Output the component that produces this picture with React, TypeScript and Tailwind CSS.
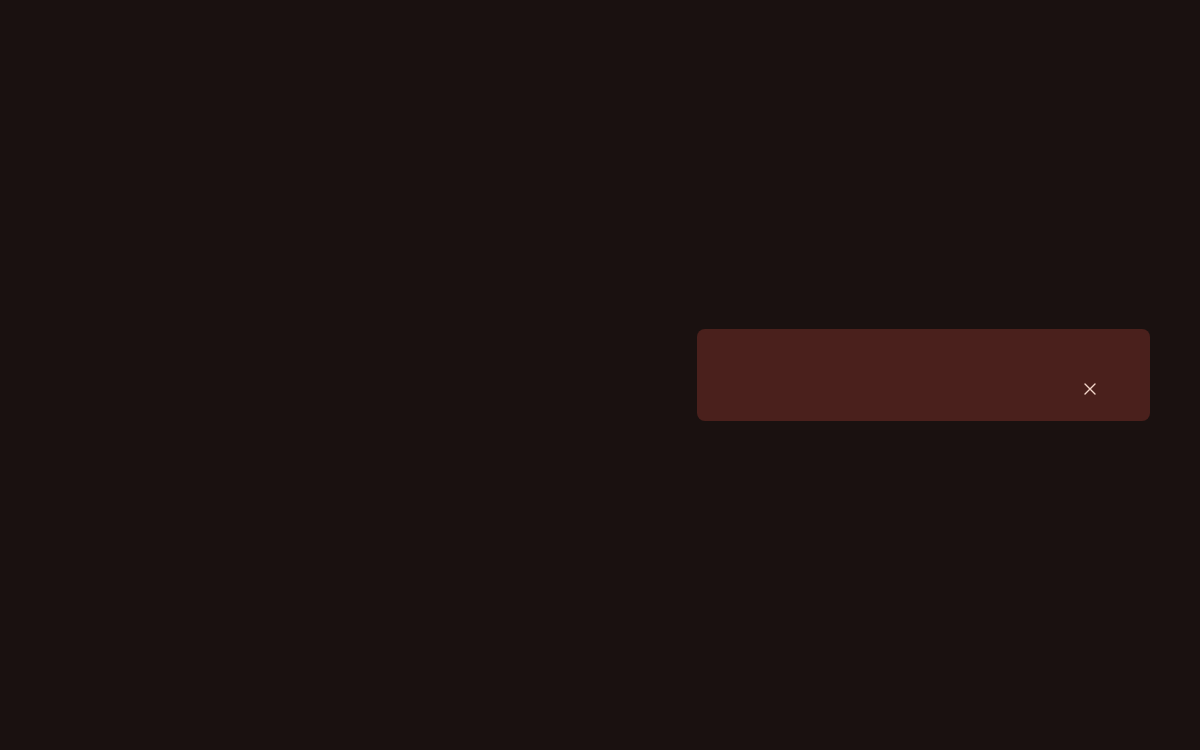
export default function App() {
  return (
    <div className="flex h-[750px] w-full items-center justify-end bg-[#1a1110] pr-[50px] font-['Inter',sans-serif]">
      <div
        role="status"
        className="flex h-[92px] w-[453px] items-end justify-end rounded-lg bg-[#4a201c] pb-[26px] pr-[54px]"
      >
        <button aria-label="Close" className="flex h-3 w-3 items-center justify-center text-[#f3d6ca]">
          <svg width="12" height="12" viewBox="0 0 12 12" fill="none" stroke="currentColor" strokeWidth="1.4" strokeLinecap="round">
            <path d="M1 1l10 10M11 1L1 11" />
          </svg>
        </button>
      </div>
    </div>
  );
}
